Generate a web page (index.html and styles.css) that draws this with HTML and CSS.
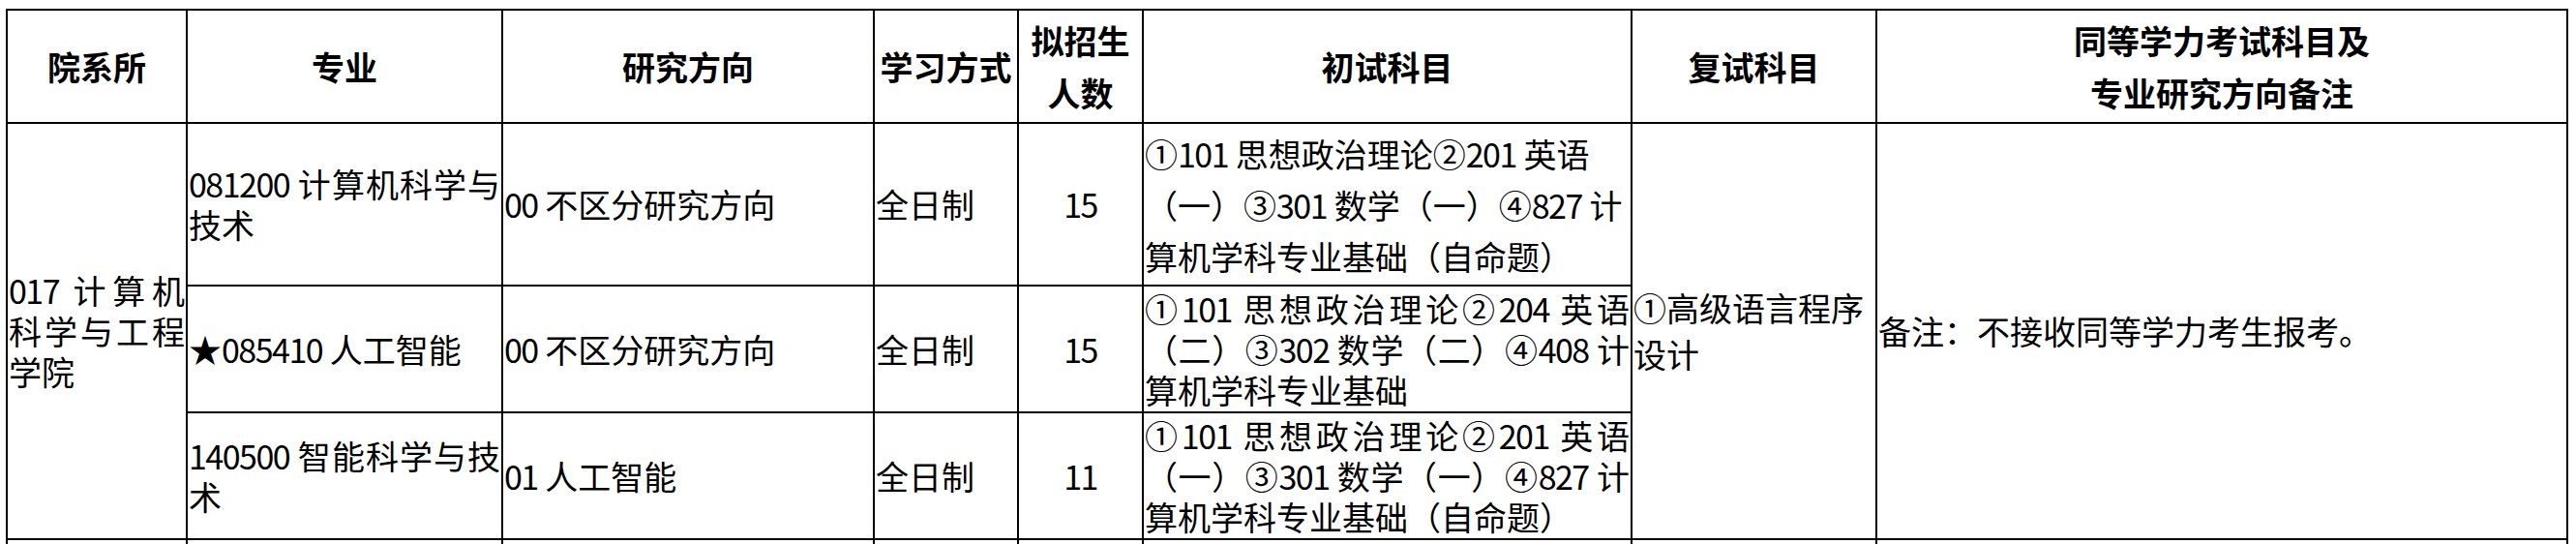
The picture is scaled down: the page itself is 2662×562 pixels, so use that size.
FILE: index.html
```html
<!DOCTYPE html>
<html lang="zh-CN">
<head>
<meta charset="utf-8">
<title>招生目录</title>
<link rel="stylesheet" href="styles.css">
</head>
<body>
<table class="plan">
  <colgroup>
    <col class="c-dept">
    <col class="c-major">
    <col class="c-dir">
    <col class="c-mode">
    <col class="c-num">
    <col class="c-exam">
    <col class="c-re">
    <col class="c-note">
  </colgroup>
  <thead>
    <tr class="r-head">
      <th>院系所</th>
      <th>专业</th>
      <th>研究方向</th>
      <th>学习方式</th>
      <th>拟招生人数</th>
      <th>初试科目</th>
      <th>复试科目</th>
      <th>同等学力考试科目及<br>专业研究方向备注</th>
    </tr>
  </thead>
  <tbody>
    <tr class="r-1">
      <td rowspan="3" class="just"><span class="n">017</span> 计算机科学与工程学院</td>
      <td class="just"><span class="n">081200</span> 计算机科学与技术</td>
      <td><span class="n">00</span> 不区分研究方向</td>
      <td>全日制</td>
      <td class="num"><span class="n">15</span></td>
      <td class="exam-wide">①<span class="n">101</span> 思想政治理论②<span class="n">201</span> 英语（一）③<span class="n">301</span> 数学（一）④<span class="n">827</span> 计算机学科专业基础（自命题）</td>
      <td rowspan="3" class="re">①高级语言程序设计</td>
      <td rowspan="3">备注：不接收同等学力考生报考。</td>
    </tr>
    <tr class="r-2">
      <td>★<span class="n">085410</span> 人工智能</td>
      <td><span class="n">00</span> 不区分研究方向</td>
      <td>全日制</td>
      <td class="num"><span class="n">15</span></td>
      <td class="just">①<span class="n">101</span> 思想政治理论②<span class="n">204</span> 英语（二）③<span class="n">302</span> 数学（二）④<span class="n">408</span> 计算机学科专业基础</td>
    </tr>
    <tr class="r-3">
      <td class="just"><span class="n">140500</span> 智能科学与技术</td>
      <td><span class="n">01</span> 人工智能</td>
      <td>全日制</td>
      <td class="num"><span class="n">11</span></td>
      <td class="just">①<span class="n">101</span> 思想政治理论②<span class="n">201</span> 英语（一）③<span class="n">301</span> 数学（一）④<span class="n">827</span> 计算机学科专业基础（自命题）</td>
    </tr>
    <tr class="r-more">
      <td></td><td></td><td></td><td></td><td></td><td></td><td></td><td></td>
    </tr>
  </tbody>
</table>
</body>
</html>
```

FILE: styles.css
```css
html, body {
  margin: 0;
  padding: 0;
  background: #ffffff;
}

body {
  height: 562px;
  overflow: hidden;
  font-family: "Noto Sans CJK SC", "Noto Sans", sans-serif;
  color: #000000;
}

.plan {
  margin: 9px 0 0 6px;
  width: 2648px;
  table-layout: fixed;
  border-collapse: collapse;
  font-size: 34px;
  line-height: 42px;
}

.c-dept { width: 186px; }
.c-major { width: 326px; }
.c-dir { width: 384px; }
.c-mode { width: 149px; }
.c-num { width: 129px; }
.c-exam { width: 505px; }
.c-re { width: 253px; }
.c-note { width: 714px; }

.plan th,
.plan td {
  border: 2px solid #000000;
  padding: 0 1px;
  vertical-align: middle;
  text-align: left;
  overflow: hidden;
}

.plan th {
  font-weight: 700;
  text-align: center;
  line-height: 54px;
}

.r-head { height: 117px; }
.r-1 { height: 168px; }
.r-2 { height: 131px; }
.r-3 { height: 131px; }
.r-more { height: 60px; }

.n {
  letter-spacing: -1.5px;
}

.plan td.just {
  text-align: justify;
  text-justify: inter-character;
}

.plan td.num {
  text-align: center;
}

.exam-wide {
  line-height: 53px;
}

.re {
  line-height: 48px;
}
```
